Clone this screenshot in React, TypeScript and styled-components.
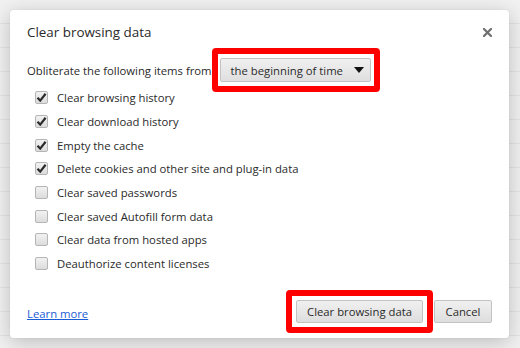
import styled, {createGlobalStyle} from 'styled-components';

const GlobalStyle = createGlobalStyle`
  html, body {
    margin: 0;
    padding: 0;
  }
  body {
    width: 520px;
    height: 348px;
    overflow: hidden;
    background: #f0f0f0;
    font-family: "Open Sans", "Noto Sans", "DejaVu Sans", sans-serif;
  }
`;

const items = [
    {label: 'Clear browsing history', checked: true},
    {label: 'Clear download history', checked: true},
    {label: 'Empty the cache', checked: true},
    {label: 'Delete cookies and other site and plug-in data', checked: true},
    {label: 'Clear saved passwords', checked: false},
    {label: 'Clear saved Autofill form data', checked: false},
    {label: 'Clear data from hosted apps', checked: false},
    {label: 'Deauthorize content licenses', checked: false},
];

// faint rows of the settings page behind the overlay
const backdropRows = 15;

function App() {
    return (
        <Page>
            <GlobalStyle/>
            <Backdrop>
                {Array.from({length: backdropRows}, (_, i) => <BackdropLine key={i}/>)}
            </Backdrop>
            <Dialog>
                <Header>
                    <Title>Clear browsing data</Title>
                    <CloseButton aria-label="Close">
                        <svg width="9" height="9" viewBox="0 0 9 9">
                            <path d="M1 1 L8 8 M8 1 L1 8" stroke="#6f6f6f" strokeWidth="2.2" strokeLinecap="square"/>
                        </svg>
                    </CloseButton>
                </Header>
                <PeriodRow>
                    <span>Obliterate the following items from</span>
                    <Highlight tight>
                        <Select>
                            <span>the beginning of time</span>
                            <svg width="10" height="6" viewBox="0 0 10 6">
                                <path d="M0 0 H10 L5 6 Z" fill="#111"/>
                            </svg>
                        </Select>
                    </Highlight>
                </PeriodRow>
                <List>
                    {items.map(item => (
                        <Row key={item.label}>
                            <Checkbox>
                                {item.checked && (
                                    <svg width="11" height="11" viewBox="0 0 11 11">
                                        <path d="M1.5 5.8 L4.2 8.6 L9.6 1.8" fill="none" stroke="#2b2b2b"
                                              strokeWidth="2.2"/>
                                    </svg>
                                )}
                            </Checkbox>
                            {item.label}
                        </Row>
                    ))}
                </List>
                <Footer>
                    <Link href="#">Learn more</Link>
                    <Actions>
                        <Highlight>
                            <Button wide>Clear browsing data</Button>
                        </Highlight>
                        <Button>Cancel</Button>
                    </Actions>
                </Footer>
            </Dialog>
        </Page>
    );
}

export default App;


const Page = styled.div`
  position: relative;
  width: 520px;
  height: 348px;
  overflow: hidden;
  background: #f1f1f1;
`;

const Backdrop = styled.div`
  display: flex;
  flex-direction: column;
`;

const BackdropLine = styled.div`
  height: 23px;
  border-bottom: 1px solid #e4e4e4;
`;

const Dialog = styled.div`
  position: absolute;
  left: 10px;
  top: 10px;
  width: 499px;
  height: 328px;
  box-sizing: border-box;
  padding: 0 17px 5px;
  background: #fff;
  border-radius: 3px;
  box-shadow: 0 4px 20px rgba(0, 0, 0, 0.22), 0 0 1px rgba(0, 0, 0, 0.2);
  display: flex;
  flex-direction: column;
  color: #2a2a2a;
`;

const Header = styled.div`
  display: flex;
  align-items: center;
  justify-content: space-between;
  padding-top: 12px;
`;

const Title = styled.h1`
  margin: 0;
  font-size: 13.4px;
  font-weight: 400;
  line-height: 20px;
  color: #2a2a2a;
`;

const CloseButton = styled.button`
  display: flex;
  align-items: center;
  justify-content: center;
  width: 12px;
  height: 12px;
  padding: 0;
  margin-right: -1px;
  border: none;
  background: none;
`;

const PeriodRow = styled.div`
  display: flex;
  align-items: center;
  height: 24px;
  margin-top: 16px;
  font-size: 11.3px;
  white-space: nowrap;
`;

type HighlightProps = {
    tight?: boolean
}

const Highlight = styled.span<HighlightProps>`
  display: inline-flex;
  border: 6px solid #ff0000;
  border-radius: 4px;
  padding: ${props => props.tight ? '4px 3px 4px 2px' : '4px'};
  margin: ${props => props.tight ? '-10px 0' : '0'};
  flex-shrink: 0;
`;

const Select = styled.div`
  display: flex;
  align-items: center;
  justify-content: space-between;
  box-sizing: border-box;
  width: 151px;
  height: 24px;
  padding: 0 6px 0 10px;
  border: 1px solid #c3c3c3;
  border-radius: 2px;
  background: linear-gradient(#f0f0f0, #dfdfdf);
  font-size: 11.3px;
  color: #2a2a2a;

  & svg {
    flex-shrink: 0;
  }
`;

const List = styled.div`
  display: flex;
  flex-direction: column;
  margin-top: 4px;
  padding-left: 8px;
`;

const Row = styled.label`
  display: flex;
  align-items: center;
  gap: 9px;
  height: 23.7px;
  font-size: 11.3px;
  color: #2a2a2a;
  white-space: nowrap;
`;

const Checkbox = styled.span`
  display: flex;
  align-items: center;
  justify-content: center;
  box-sizing: border-box;
  width: 13px;
  height: 13px;
  border: 1px solid #b5b5b5;
  border-radius: 2px;
  background: linear-gradient(#f2f2f2, #dcdcdc);
`;

const Footer = styled.div`
  display: flex;
  align-items: center;
  justify-content: space-between;
  margin-top: auto;
`;

const Link = styled.a`
  font-size: 11.3px;
  color: #1a5bd6;
  text-decoration: underline;
  margin-top: 3px;
`;

const Actions = styled.div`
  display: flex;
  align-items: center;
  gap: 1px;
`;

type ButtonProps = {
    wide?: boolean
}

const Button = styled.button<ButtonProps>`
  box-sizing: border-box;
  width: ${props => props.wide ? '127px' : '58px'};
  height: 23px;
  padding: 0;
  border: 1px solid #c3c3c3;
  border-radius: 2px;
  background: linear-gradient(#f0f0f0, #dedede);
  font-family: inherit;
  font-size: 11.3px;
  color: #2a2a2a;
  white-space: nowrap;
`;
